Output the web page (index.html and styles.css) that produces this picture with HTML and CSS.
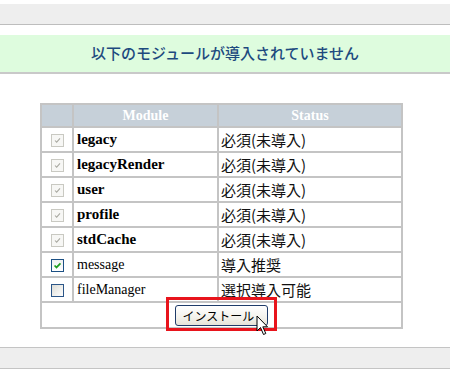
FILE: index.html
```html
<!DOCTYPE html>
<html lang="ja">
<head>
<meta charset="utf-8">
<link rel="stylesheet" href="styles.css">
</head>
<body>
<div class="topbar"></div>
<div class="banner">以下のモジュールが導入されていません</div>
<div class="wrap">
<table class="mods">
  <thead>
    <tr><th class="c1"></th><th class="c2">Module</th><th class="c3">Status</th></tr>
  </thead>
  <tbody>
    <tr><td class="c1"><span class="cb dis"><svg viewBox="0 0 13 13"><path d="M3.5 6.5 L5.5 8.5 L9.5 4" fill="none" stroke="#a8a8a0" stroke-width="1.2"/></svg></span></td><td class="c2 b">legacy</td><td class="c3">必須(未導入)</td></tr>
    <tr><td class="c1"><span class="cb dis"><svg viewBox="0 0 13 13"><path d="M3.5 6.5 L5.5 8.5 L9.5 4" fill="none" stroke="#a8a8a0" stroke-width="1.2"/></svg></span></td><td class="c2 b">legacyRender</td><td class="c3">必須(未導入)</td></tr>
    <tr><td class="c1"><span class="cb dis"><svg viewBox="0 0 13 13"><path d="M3.5 6.5 L5.5 8.5 L9.5 4" fill="none" stroke="#a8a8a0" stroke-width="1.2"/></svg></span></td><td class="c2 b">user</td><td class="c3">必須(未導入)</td></tr>
    <tr><td class="c1"><span class="cb dis"><svg viewBox="0 0 13 13"><path d="M3.5 6.5 L5.5 8.5 L9.5 4" fill="none" stroke="#a8a8a0" stroke-width="1.2"/></svg></span></td><td class="c2 b">profile</td><td class="c3">必須(未導入)</td></tr>
    <tr><td class="c1"><span class="cb dis"><svg viewBox="0 0 13 13"><path d="M3.5 6.5 L5.5 8.5 L9.5 4" fill="none" stroke="#a8a8a0" stroke-width="1.2"/></svg></span></td><td class="c2 b">stdCache</td><td class="c3">必須(未導入)</td></tr>
    <tr><td class="c1"><span class="cb on"><svg viewBox="0 0 13 13"><path d="M3 6.5 L5.3 8.8 L10 4" fill="none" stroke="#1f9d1f" stroke-width="2"/></svg></span></td><td class="c2">message</td><td class="c3">導入推奨</td></tr>
    <tr><td class="c1"><span class="cb off"></span></td><td class="c2">fileManager</td><td class="c3">選択導入可能</td></tr>
    <tr class="foot"><td colspan="3"><button class="btn" type="button">インストール</button></td></tr>
  </tbody>
</table>
<div class="highlight"></div>
<svg class="cursor" viewBox="0 0 14 22" width="14" height="22"><path d="M1 1 L1 16 L4.5 12.5 L7.5 19.5 L9.8 18.5 L6.8 11.8 L11.5 11.8 Z" fill="#fff" stroke="#000" stroke-width="1" stroke-linejoin="miter"/></svg>
</div>
<div class="bottombar"></div>
</body>
</html>
```
FILE: styles.css
```css
html, body {
  margin: 0;
  padding: 0;
  background: #fff;
}
body {
  width: 450px;
  height: 373px;
  overflow: hidden;
  font-family: "Liberation Serif", serif;
}
.topbar {
  margin-top: 4px;
  height: 20px;
  background: #eeeeee;
  border-bottom: 1px solid #bdbdbd;
}
.banner {
  margin-top: 10px;
  height: 37px;
  line-height: 35px;
  background: #defcde;
  border-bottom: 2px solid #c9c9c9;
  text-align: center;
  color: #1d4a7e;
  font-family: "Noto Sans CJK JP", sans-serif;
  font-size: 15px;
  font-weight: 500;
}
.wrap {
  position: relative;
  padding: 29px 0 0 40px;
}
.mods {
  width: 363px;
  border-collapse: separate;
  border-spacing: 0;
  border-top: 2px solid #c4c4c4;
  border-left: 2px solid #c4c4c4;
  table-layout: fixed;
}
.mods th, .mods td {
  padding: 0;
  border-right: 2px solid #c4c4c4;
  border-bottom: 2px solid #c4c4c4;
  box-sizing: border-box;
}
.mods th {
  height: 23px;
  background: #c6d0d9;
  color: #fff;
  font-weight: bold;
  font-size: 14px;
  text-align: center;
}
.mods td {
  height: 25px;
  color: #000;
  font-size: 14px;
  vertical-align: middle;
}
.mods .c1 { width: 32px; text-align: center; }
.mods .c2 { width: 145px; }
.mods .c3 { width: 184px; }
.mods td.c2 { padding-left: 3px; }
.mods td.b { font-weight: bold; font-size: 15px; }
.mods td.c3 {
  padding-left: 2px;
  font-family: "Noto Sans CJK JP", sans-serif;
  font-size: 15px;
  color: #111;
}
.cb {
  display: inline-block;
  width: 13px;
  height: 13px;
  box-sizing: border-box;
  vertical-align: middle;
}
.cb svg {
  display: block;
  width: 11px;
  height: 11px;
}
.cb.dis {
  border: 1px solid #c9c9c2;
  background: #f7f7f5;
}
.cb.on {
  border: 1px solid #1c5084;
  background: linear-gradient(#f0f0f0, #ffffff);
}
.cb.off {
  border: 1px solid #2c5688;
  background: linear-gradient(135deg, #dcdcd6, #ffffff);
}
.mods tr.foot td {
  height: 26px;
  text-align: center;
  vertical-align: top;
  padding-top: 2px;
}
.btn {
  width: 93px;
  height: 21px;
  border: 1px solid #1f3b69;
  border-radius: 3px;
  background: linear-gradient(#ffffff, #f3f2ec 60%, #e6e3d8);
  font-family: "Noto Sans CJK JP", sans-serif;
  font-size: 12px;
  color: #000;
  padding: 0 6px 0 0;
  line-height: 18px;
}
.highlight {
  position: absolute;
  left: 166px;
  top: 223px;
  width: 111px;
  height: 34px;
  box-sizing: border-box;
  border: 3px solid #e8141c;
}
.cursor {
  position: absolute;
  left: 256px;
  top: 241px;
}
.bottombar {
  margin-top: 18px;
  height: 20px;
  background: #eeeeee;
  border-top: 1px solid #c4c4c4;
  border-bottom: 1px solid #c4c4c4;
}
```
